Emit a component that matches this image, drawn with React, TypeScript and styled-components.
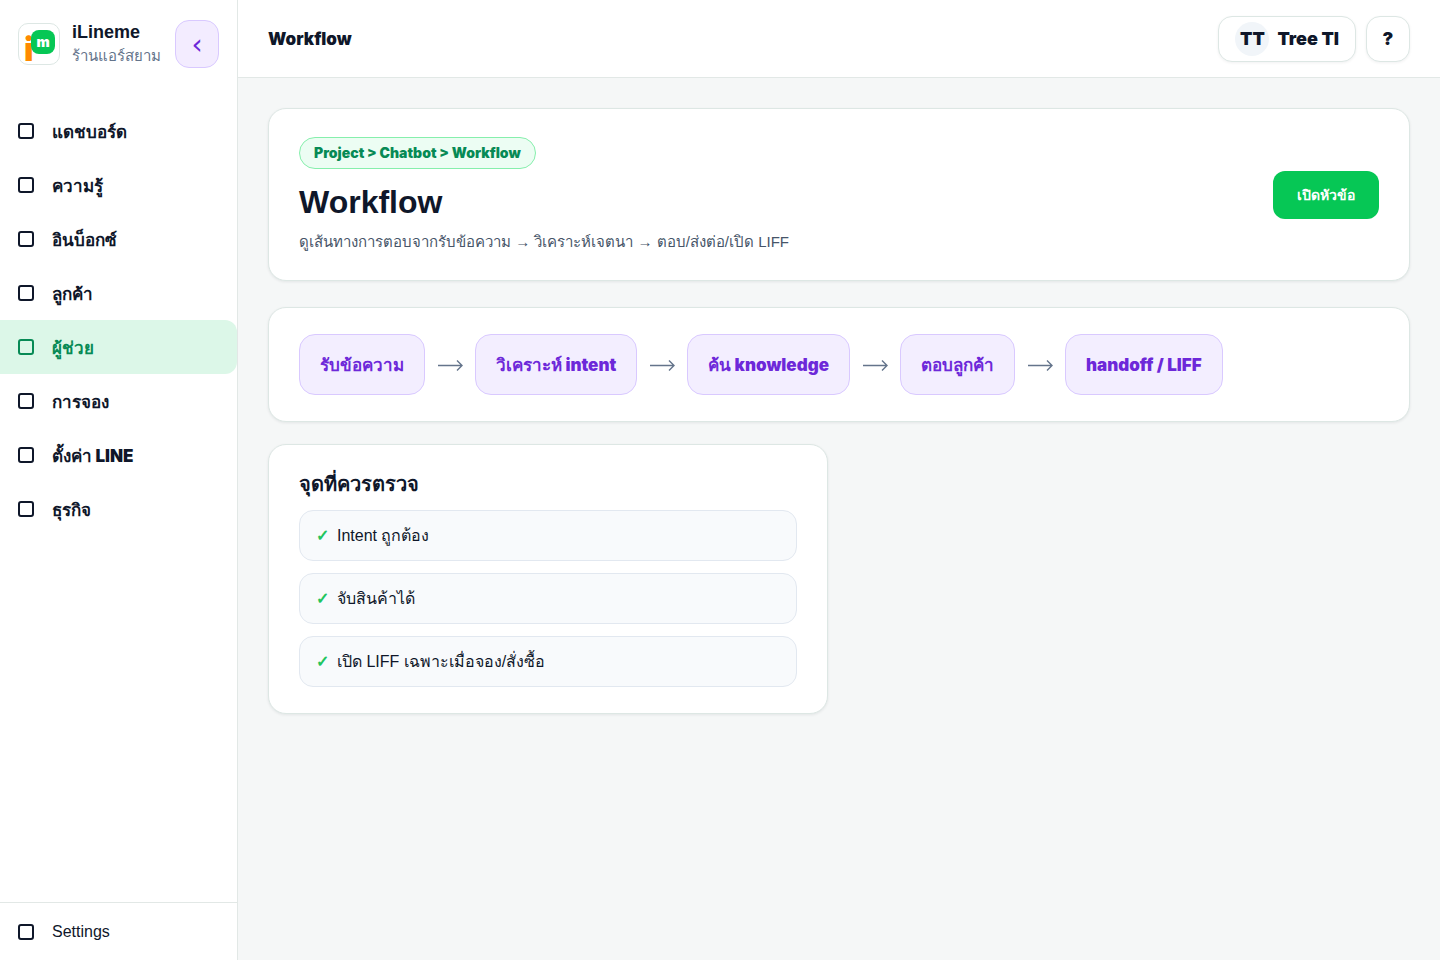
import React from "react";
import styled, { createGlobalStyle } from "styled-components";

const sans = `"Liberation Sans", Arial, sans-serif`;
const heavy = `Inter, "Liberation Sans", sans-serif`;

const Global = createGlobalStyle`
  *, *::before, *::after { box-sizing: border-box; }
  body { margin: 0; background: #f5f7f7; color: #0f172a; font-family: ${sans}; font-size: 16px; line-height: 24px; }
  h1, h2, p, ul, ol { margin: 0; padding: 0; }
  ul, ol { list-style: none; }
  button { font: inherit; color: inherit; cursor: pointer; padding: 0; }
  a { color: inherit; text-decoration: none; }
`;

const Shell = styled.div`
  display: grid;
  grid-template-columns: 238px minmax(0, 1fr);
  min-height: 100vh;
`;

const Sidebar = styled.aside`
  display: flex;
  flex-direction: column;
  background: #fff;
  border-right: 1px solid #e2e8e6;
`;

const Brand = styled.div`
  display: flex;
  align-items: center;
  gap: 12px;
  padding: 20px 18px 36px;
`;

const Logo = styled.div`
  position: relative;
  flex: none;
  width: 42px;
  height: 42px;
  background: #fff;
  border: 1px solid #dde7e4;
  border-radius: 10px;
`;

const LogoI = styled.span`
  position: absolute;
  left: 5px;
  top: 10px;
  color: #ff8a00;
  font: 900 32px/32px ${heavy};
`;

const LogoM = styled.span`
  position: absolute;
  left: 12px;
  top: 6px;
  width: 24px;
  height: 24px;
  border-radius: 8px;
  background: #06c755;
  color: #fff;
  font: 900 14px/24px ${heavy};
  text-align: center;
`;

const BrandText = styled.div`
  flex: 1;
  min-width: 0;
  white-space: nowrap;
`;

const BrandName = styled.p`
  font-size: 18px;
  font-weight: 700;
`;

const BrandShop = styled.p`
  color: #64748b;
  font-size: 15px;
`;

const Collapse = styled.button`
  flex: none;
  width: 44px;
  height: 48px;
  padding-top: 2px;
  border: 1px solid #d9c9ff;
  border-radius: 14px;
  background: #f3ecff;
  color: #6d28d9;
  font-family: "DejaVu Sans", sans-serif;
  font-size: 28px;
`;

const Nav = styled.nav`
  flex: 1;
`;

const NavItem = styled.a<{ $active?: boolean }>`
  display: flex;
  align-items: center;
  gap: 18px;
  height: 54px;
  padding: 0 18px;
  border-radius: 0 12px 12px 0;
  background: ${(p) => (p.$active ? "#dcf7e8" : "transparent")};
  color: ${(p) => (p.$active ? "#078a55" : "#0f172a")};
  font-family: ${heavy};
  font-size: 17px;
  font-weight: 900;
`;

const NavLabel = styled.span`
  padding-top: 2px;
`;

const Square = styled.span`
  width: 16px;
  height: 16px;
  border: 2px solid currentColor;
  border-radius: 3px;
`;

const SettingsLink = styled.a`
  display: flex;
  align-items: center;
  gap: 18px;
  height: 58px;
  padding: 0 18px;
  border-top: 1px solid #e2e8e6;
`;

const Main = styled.div`
  display: flex;
  flex-direction: column;
  min-width: 0;
`;

const Topbar = styled.header`
  display: flex;
  align-items: center;
  justify-content: space-between;
  height: 78px;
  padding: 0 30px;
  background: #fff;
  border-bottom: 1px solid #e2e8e6;
`;

const TopTitle = styled.p`
  font-family: ${heavy};
  font-size: 17px;
  font-weight: 900;
`;

const TopActions = styled.div`
  display: flex;
  gap: 10px;
`;

const TopButton = styled.button<{ $square?: boolean }>`
  display: flex;
  align-items: center;
  justify-content: center;
  gap: 8px;
  min-width: 44px;
  height: 46px;
  padding: 0 ${(p) => (p.$square ? 0 : 16)}px;
  background: #fff;
  border: 1px solid #dde7e4;
  border-radius: 14px;
  box-shadow: 0 1px 3px rgba(15, 23, 42, 0.06);
  font-family: ${heavy};
  font-size: 18px;
  font-weight: 900;
`;

const Avatar = styled.span`
  display: grid;
  place-items: center;
  width: 34px;
  height: 34px;
  border-radius: 50%;
  background: #f1f5f9;
`;

const Content = styled.main`
  display: flex;
  flex-direction: column;
  gap: 22px;
  padding: 30px;
`;

const Card = styled.section`
  background: #fff;
  border: 1px solid #dde7e4;
  border-radius: 18px;
  box-shadow: 0 1px 3px rgba(15, 23, 42, 0.08);
  padding: 26px 30px;
`;

const Hero = styled(Card)`
  display: flex;
  align-items: center;
  justify-content: space-between;
  margin-bottom: 4px;
  padding: 28px 30px;
`;

const Crumb = styled.p`
  width: fit-content;
  padding: 0 14px;
  border: 1px solid #86efac;
  border-radius: 16px;
  background: #ecfdf3;
  color: #078a55;
  font: 900 14px/30px ${heavy};
`;

const Title = styled.h1`
  margin: 12px 0 9px;
  font-size: 32px;
  line-height: 42px;
`;

const Lead = styled.p`
  color: #475569;
  font-size: 15px;
  line-height: 20px;
`;

const Primary = styled.button`
  height: 48px;
  padding: 0 24px;
  border: 0;
  border-radius: 12px;
  background: #06c755;
  color: #fff;
  font-family: ${heavy};
  font-size: 14px;
  font-weight: 900;
`;

const Flow = styled.ol`
  display: flex;
  flex-wrap: wrap;
  gap: 12px;
`;

const Step = styled.li`
  display: flex;
  align-items: center;
  gap: 12px;
`;

const ArrowIcon = styled.svg`
  width: 26px;
  height: 12px;
  fill: none;
  stroke: #64748b;
  stroke-width: 1.4;
`;

const Chip = styled.span`
  padding: 18px 20px 17px;
  border: 1px solid #d9c9ff;
  border-radius: 16px;
  background: #f3eeff;
  color: #6d28d9;
  font-family: ${heavy};
  font-size: 17px;
  font-weight: 900;
`;

const Columns = styled.div`
  display: grid;
  grid-template-columns: repeat(2, minmax(0, 1fr));
  gap: 22px;
`;

const CardTitle = styled.h2`
  margin-bottom: 12px;
  font-size: 20px;
  line-height: 27px;
`;

const Checks = styled.ul`
  display: grid;
  gap: 12px;
`;

const Check = styled.li`
  display: flex;
  align-items: center;
  gap: 8px;
  height: 51px;
  padding: 0 16px;
  border: 1px solid #e2e8f0;
  border-radius: 14px;
  background: #f8fafc;

  &::before {
    content: "✓";
    color: #22c55e;
    font-weight: 700;
  }
`;

const nav = ["แดชบอร์ด", "ความรู้", "อินบ็อกซ์", "ลูกค้า", "ผู้ช่วย", "การจอง", "ตั้งค่า LINE", "ธุรกิจ"];
const steps = ["รับข้อความ", "วิเคราะห์ intent", "ค้น knowledge", "ตอบลูกค้า", "handoff / LIFF"];
const checks = ["Intent ถูกต้อง", "จับสินค้าได้", "เปิด LIFF เฉพาะเมื่อจอง/สั่งซื้อ"];

export default function App() {
  return (
    <>
      <Global />
      <Shell>
        <Sidebar>
          <Brand>
            <Logo>
              <LogoI>i</LogoI>
              <LogoM>m</LogoM>
            </Logo>
            <BrandText>
              <BrandName>iLineme</BrandName>
              <BrandShop>ร้านแอร์สยาม</BrandShop>
            </BrandText>
            <Collapse type="button">‹</Collapse>
          </Brand>
          <Nav>
            {nav.map((label) => (
              <NavItem key={label} href="#" $active={label === "ผู้ช่วย"}>
                <Square />
                <NavLabel>{label}</NavLabel>
              </NavItem>
            ))}
          </Nav>
          <SettingsLink href="#">
            <Square />
            Settings
          </SettingsLink>
        </Sidebar>
        <Main>
          <Topbar>
            <TopTitle>Workflow</TopTitle>
            <TopActions>
              <TopButton type="button">
                <Avatar>TT</Avatar>
                Tree TI
              </TopButton>
              <TopButton type="button" $square>?</TopButton>
            </TopActions>
          </Topbar>
          <Content>
            <Hero>
              <div>
                <Crumb>Project &gt; Chatbot &gt; Workflow</Crumb>
                <Title>Workflow</Title>
                <Lead>ดูเส้นทางการตอบจากรับข้อความ → วิเคราะห์เจตนา → ตอบ/ส่งต่อ/เปิด LIFF</Lead>
              </div>
              <Primary type="button">เปิดหัวข้อ</Primary>
            </Hero>
            <Card>
              <Flow>
                {steps.map((step, index) => (
                  <Step key={step}>
                    <Chip>{step}</Chip>
                    {index < steps.length - 1 && (
                      <ArrowIcon viewBox="0 0 26 12" aria-hidden="true">
                        <path d="M1 6.500H25M20 1.500L25 6.500L20 11.500" />
                      </ArrowIcon>
                    )}
                  </Step>
                ))}
              </Flow>
            </Card>
            <Columns>
              <Card>
                <CardTitle>จุดที่ควรตรวจ</CardTitle>
                <Checks>
                  {checks.map((item) => (
                    <Check key={item}>{item}</Check>
                  ))}
                </Checks>
              </Card>
            </Columns>
          </Content>
        </Main>
      </Shell>
    </>
  );
}
